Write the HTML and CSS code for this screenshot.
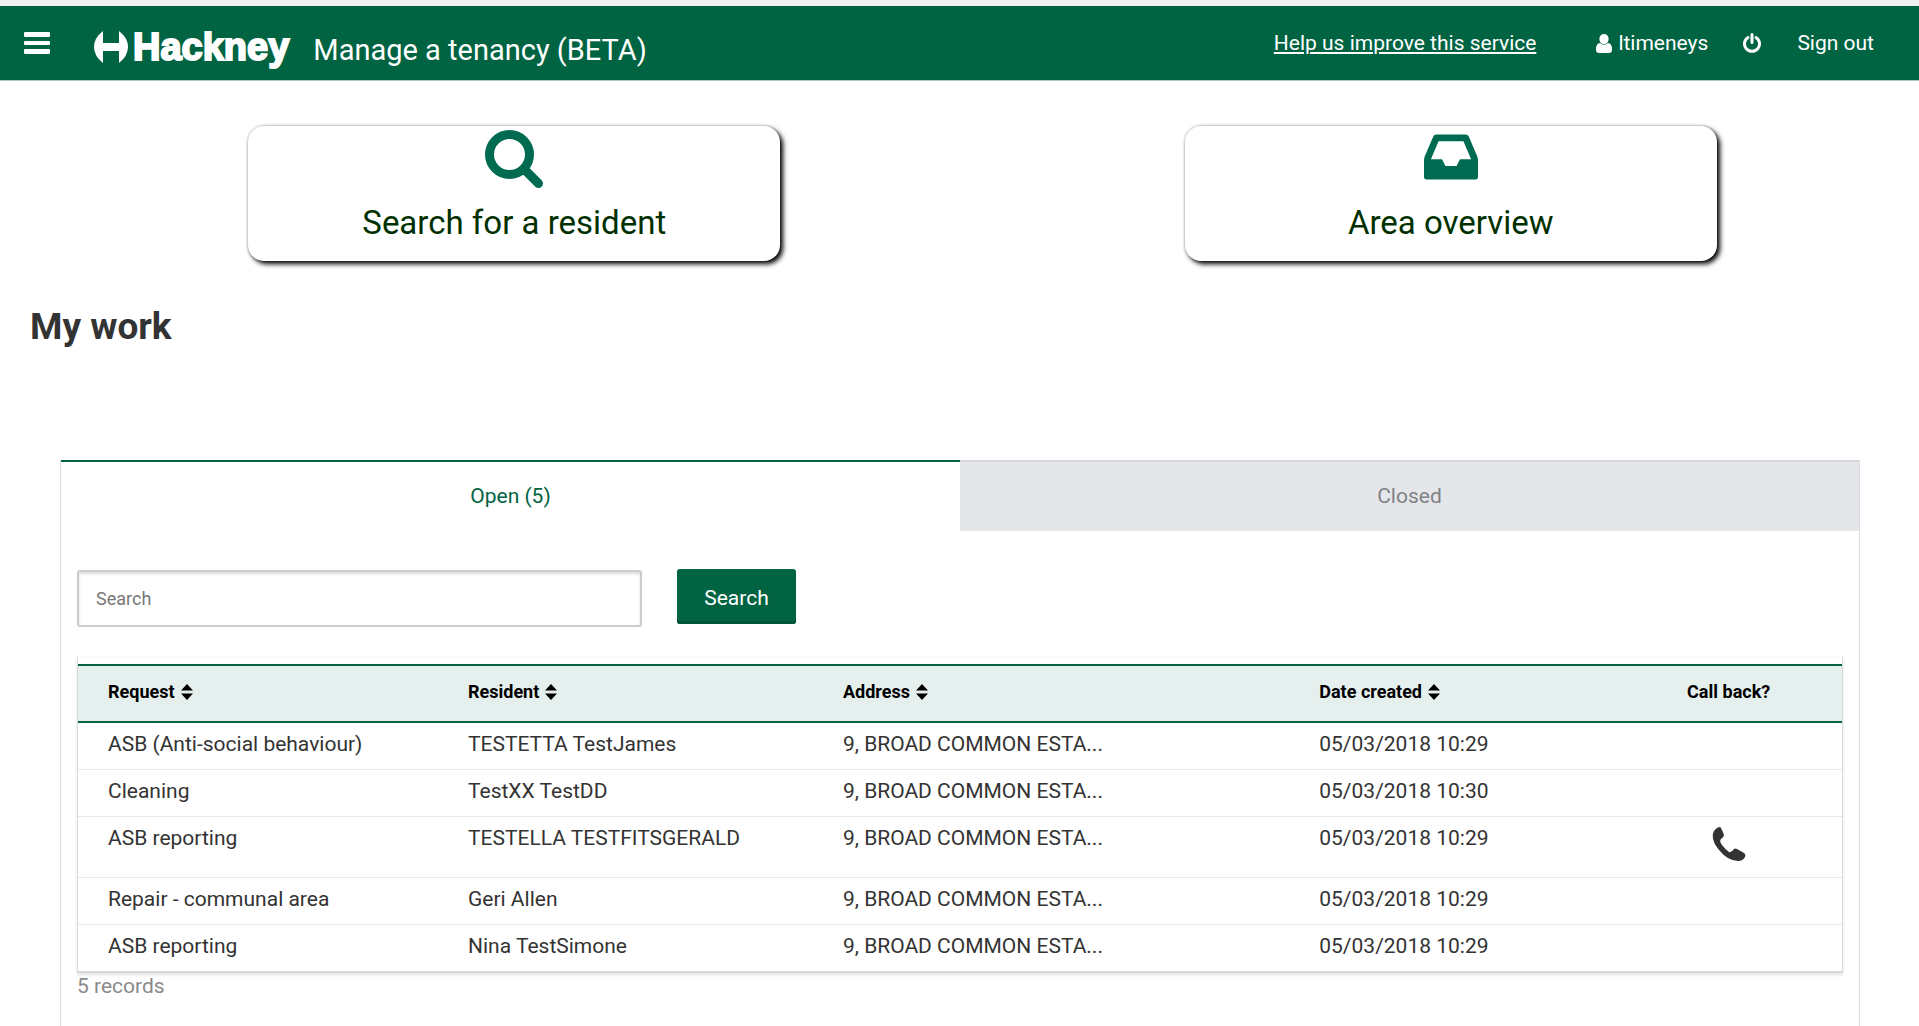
FILE: index.html
```html
<!DOCTYPE html>
<html lang="en">
<head>
<meta charset="utf-8">
<meta name="viewport" content="width=device-width, initial-scale=1">
<title>Manage a tenancy</title>
<link rel="stylesheet" href="styles.css">
</head>
<body>
<header class="header">
  <button class="menu" type="button" aria-label="Menu">
    <svg viewBox="0 0 26 22" width="26" height="22"><path d="M1 0h24q1 0 1 1v3q0 1-1 1H1q-1 0-1-1V1q0-1 1-1zM1 9h24q1 0 1 1v2q0 1-1 1H1q-1 0-1-1v-2q0-1 1-1zM1 17h24q1 0 1 1v3q0 1-1 1H1q-1 0-1-1v-3q0-1 1-1z"/></svg>
  </button>
  <a class="logo" href="#">
    <svg viewBox="0 0 34 32" width="34" height="32"><path d="M9 0v12h16V0q9 7 9 16t-9 16V20H9v12Q0 25 0 16T9 0z"/></svg>
    <span>Hackney</span>
  </a>
  <span class="title">Manage a tenancy (BETA)</span>
  <nav class="links">
    <a class="help" href="#">Help us improve this service</a>
    <span class="user"><svg viewBox="0 0 16 19" width="16" height="19"><path d="M8 0a4.600 4.600 0 0 1 4.600 5C12.600 8 10.500 10 8 10S3.400 8 3.400 5A4.600 4.600 0 0 1 8 0zM4 9q4 3.500 8 0 4 0 4 6.500 0 3.500-3 3.500H3q-3 0-3-3.500Q0 9 4 9z"/></svg>ltimeneys</span>
    <svg class="power" viewBox="0 0 18 20" width="18" height="20"><path d="M5 4.500a7.500 7.500 0 1 0 8 0M9 1.500v8" fill="none" stroke="currentColor" stroke-width="3" stroke-linecap="round"/></svg>
    <a href="#">Sign out</a>
  </nav>
</header>
<main>
  <div class="cards">
    <a class="card" href="#">
      <svg viewBox="0 0 58 58" width="58" height="58"><circle cx="24.500" cy="24.500" r="20" fill="none" stroke="currentColor" stroke-width="9"/><path d="M39 39L53.500 53.500" stroke="currentColor" stroke-width="9" stroke-linecap="round"/></svg>
      <span>Search for a resident</span>
    </a>
    <a class="card" href="#">
      <svg viewBox="0 128 1536 1650" width="54" height="58"><path d="M1023 960h316q-1-3-2.500-8.500t-2.500-7.500l-212-496h-708l-212 496q-1 3-2.500 8.500t-2.500 7.500h316l95 192h320zm513 30v482q0 26-19 45t-45 19h-1408q-26 0-45-19t-19-45v-482q0-62 25-123l238-552q10-25 36.500-42t52.500-17h832q26 0 52.500 17t36.500 42l238 552q25 61 25 123z"/></svg>
      <span>Area overview</span>
    </a>
  </div>
  <h1>My work</h1>
  <section class="panel">
    <div class="tabs" role="tablist">
      <button class="tab active" type="button" role="tab" aria-selected="true">Open (5)</button>
      <button class="tab" type="button" role="tab" aria-selected="false">Closed</button>
    </div>
    <div class="content">
      <form class="search">
        <input type="text" placeholder="Search" aria-label="Search">
        <button type="button">Search</button>
      </form>
      <div class="grid">
        <table>
          <colgroup><col class="c1"><col class="c2"><col class="c3"><col class="c4"><col class="c5"></colgroup>
          <thead><tr>
            <th scope="col">Request<svg class="sort" viewBox="0 0 12 16"><path d="M6 0l6 6.500H0zM6 16l6-6.500H0z"/></svg></th>
            <th scope="col">Resident<svg class="sort" viewBox="0 0 12 16"><path d="M6 0l6 6.500H0zM6 16l6-6.500H0z"/></svg></th>
            <th scope="col">Address<svg class="sort" viewBox="0 0 12 16"><path d="M6 0l6 6.500H0zM6 16l6-6.500H0z"/></svg></th>
            <th scope="col">Date created<svg class="sort" viewBox="0 0 12 16"><path d="M6 0l6 6.500H0zM6 16l6-6.500H0z"/></svg></th>
            <th scope="col">Call back?</th>
          </tr></thead>
          <tbody>
            <tr><td>ASB (Anti-social behaviour)</td><td>TESTETTA TestJames</td><td>9, BROAD COMMON ESTA...</td><td>05/03/2018 10:29</td><td></td></tr>
            <tr><td>Cleaning</td><td>TestXX TestDD</td><td>9, BROAD COMMON ESTA...</td><td>05/03/2018 10:30</td><td></td></tr>
            <tr><td>ASB reporting</td><td>TESTELLA TESTFITSGERALD</td><td>9, BROAD COMMON ESTA...</td><td>05/03/2018 10:29</td><td><svg class="phone" viewBox="0 0 34 34"><path d="M2 4Q5 0 8 0q1 0 4 8 0 2-3 4-2 2 1 6t7 7q2 1 5-3 1-1 3 0l7 4q2 1 1 4-2 4-7 4-10 0-19-11T2 4z"/></svg></td></tr>
            <tr><td>Repair - communal area</td><td>Geri Allen</td><td>9, BROAD COMMON ESTA...</td><td>05/03/2018 10:29</td><td></td></tr>
            <tr><td>ASB reporting</td><td>Nina TestSimone</td><td>9, BROAD COMMON ESTA...</td><td>05/03/2018 10:29</td><td></td></tr>
          </tbody>
        </table>
      </div>
      <p class="count">5 records</p>
    </div>
  </section>
</main>
</body>
</html>
```
FILE: styles.css
```css
* { box-sizing: border-box; }
body {
  margin: 0;
  min-height: 100vh;
  display: flex;
  flex-direction: column;
  background: #fff;
  color: #333;
  font: 21px/26px Roboto, "Liberation Sans", sans-serif;
}
svg { fill: currentColor; flex: none; }
a { color: inherit; text-decoration: none; }
button, input { font: inherit; margin: 0; }
.header {
  display: flex;
  align-items: center;
  height: 81px;
  padding: 0 45px 0 24px;
  border-top: 6px solid #f0f0f0;
  border-bottom: 1px solid #b5c9c0;
  background: #006443;
  color: #fff;
}
.menu {
  display: flex;
  padding: 0;
  border: 0;
  background: none;
  color: inherit;
}
.logo {
  display: flex;
  align-items: center;
  gap: 5px;
  margin: 8px 24px 0 44px;
  font: bold 38px/44px "Liberation Sans", sans-serif;
  -webkit-text-stroke: 2px currentColor;
}
.title { margin-top: 14px; font-size: 29px; line-height: 34px; }
.links { display: flex; align-items: center; margin-left: auto; }
.help { margin-right: 60px; text-decoration: underline; }
.user { display: flex; align-items: center; gap: 6px; margin-right: 35px; }
.power { margin-right: 36px; }
main { display: flex; flex-direction: column; flex: 1; }
.cards {
  display: grid;
  grid-template-columns: 1fr 1fr;
  justify-items: center;
  padding: 45px 0 0 46px;
}
.card {
  display: flex;
  flex-direction: column;
  align-items: center;
  gap: 10px;
  width: 532px;
  height: 135px;
  padding-top: 4px;
  border-radius: 16px;
  box-shadow: 3px 3px 5px #000, 0 0 3px #aaa;
  background: #fff;
  color: #006b50;
}
.card span { color: #003000; font-size: 33px; line-height: 50px; }
h1 { margin: 43px 30px 0; font-size: 37px; line-height: 46px; }
.panel {
  display: flex;
  flex-direction: column;
  flex: 1;
  margin: 110px 59px 0 60px;
  border: 1px solid #dcdde0;
  border-width: 0 1px;
}
.tabs { display: grid; grid-template-columns: 1fr 1fr; }
.tab {
  height: 71px;
  padding: 0 0 2px;
  border: 0;
  border-top: 2px solid #d8d9dc;
  background: #e5e6ea;
  color: #808285;
}
.tab.active { border-color: #006443; background: #fff; color: #006443; }
.content { padding: 38px 16px 0; }
.search { display: flex; gap: 35px; }
.search input {
  width: 565px;
  height: 57px;
  margin-top: 1px;
  padding: 0 17px;
  border: 2px solid #ccc;
  border-radius: 3px;
  box-shadow: inset 0 2px 3px #ddd;
  font-size: 18px;
}
.search input::placeholder { color: #777; }
.search button {
  width: 119px;
  height: 55px;
  padding: 2px 0 0;
  border: 0;
  border-radius: 3px;
  box-shadow: inset 0 -3px #005437;
  background: #006443;
  color: #fff;
}
.grid {
  margin-top: 29px;
  padding-top: 7px;
  border: 1px solid #d9dae0;
  border-top-color: #fafafa;
  border-bottom-width: 2px;
  box-shadow: 0 2px 3px #e4e4e4;
}
table { width: 100%; table-layout: fixed; border-collapse: collapse; }
.c1, .c2 { width: 375px; }
.c3 { width: 27%; }
.c5 { width: 12%; }
th {
  height: 57px;
  padding: 0 15px 3px;
  border: solid #006443;
  border-width: 2px 0;
  background: #e5efed;
  color: #000;
  font-size: 18px;
  text-align: left;
}
td {
  height: 47px;
  padding: 8px 15px 10px;
  border-bottom: 1px solid #e8e8e8;
  vertical-align: top;
}
tr:last-child td { border-bottom: 0; }
th:first-child, td:first-child { padding-left: 30px; }
th:last-child, td:last-child { padding-right: 30px; text-align: center; }
.sort { width: 12px; height: 16px; margin-left: 6px; vertical-align: -2px; }
.phone { display: block; width: 34px; height: 34px; margin: 2px auto 6px; }
.count { margin: 0; color: #8a8a8a; }
```
